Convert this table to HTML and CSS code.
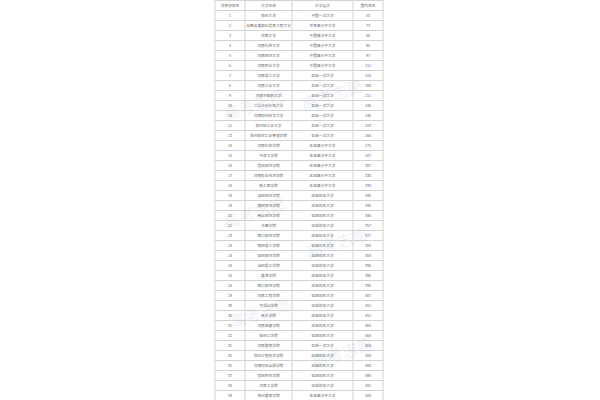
FILE: index.html
```html
<!DOCTYPE html>
<html lang="zh">
<head>
<meta charset="utf-8">
<title>河南省大学排名</title>
<link rel="stylesheet" href="styles.css">
</head>
<body>
<div class="page">
<table class="rank">
<colgroup><col class="c1"><col class="c2"><col class="c3"><col class="c4"></colgroup>
<thead>
<tr><th>河南省排名</th><th>大学名称</th><th>办学层次</th><th>国内排名</th></tr>
</thead>
<tbody>
<tr><td>1</td><td>郑州大学</td><td>中国一流大学</td><td>53</td></tr>
<tr><td>2</td><td>战略支援部队信息工程大学</td><td>世界高水平大学</td><td>73</td></tr>
<tr><td>3</td><td>河南大学</td><td>中国高水平大学</td><td>80</td></tr>
<tr><td>4</td><td>河南科技大学</td><td>中国高水平大学</td><td>94</td></tr>
<tr><td>5</td><td>河南师范大学</td><td>中国高水平大学</td><td>97</td></tr>
<tr><td>6</td><td>河南农业大学</td><td>中国高水平大学</td><td>112</td></tr>
<tr><td>7</td><td>河南理工大学</td><td>区域一流大学</td><td>124</td></tr>
<tr><td>8</td><td>河南工业大学</td><td>区域一流大学</td><td>200</td></tr>
<tr><td>9</td><td>河南中医药大学</td><td>区域一流大学</td><td>211</td></tr>
<tr><td>10</td><td>华北水利水电大学</td><td>区域一流大学</td><td>246</td></tr>
<tr><td>10</td><td>河南财经政法大学</td><td>区域一流大学</td><td>246</td></tr>
<tr><td>12</td><td>郑州轻工业大学</td><td>区域一流大学</td><td>253</td></tr>
<tr><td>13</td><td>郑州航空工业管理学院</td><td>区域一流大学</td><td>268</td></tr>
<tr><td>14</td><td>河南科技学院</td><td>区域高水平大学</td><td>275</td></tr>
<tr><td>15</td><td>中原工学院</td><td>区域高水平大学</td><td>287</td></tr>
<tr><td>16</td><td>信阳师范学院</td><td>区域高水平大学</td><td>307</td></tr>
<tr><td>17</td><td>河南牧业经济学院</td><td>区域高水平大学</td><td>330</td></tr>
<tr><td>18</td><td>新乡医学院</td><td>区域高水平大学</td><td>334</td></tr>
<tr><td>19</td><td>洛阳师范学院</td><td>区域知名大学</td><td>340</td></tr>
<tr><td>19</td><td>南阳师范学院</td><td>区域知名大学</td><td>346</td></tr>
<tr><td>21</td><td>商丘师范学院</td><td>区域知名大学</td><td>346</td></tr>
<tr><td>22</td><td>许昌学院</td><td>区域知名大学</td><td>357</td></tr>
<tr><td>23</td><td>周口师范学院</td><td>区域知名大学</td><td>377</td></tr>
<tr><td>24</td><td>南阳理工学院</td><td>区域知名大学</td><td>384</td></tr>
<tr><td>24</td><td>安阳师范学院</td><td>区域知名大学</td><td>384</td></tr>
<tr><td>26</td><td>洛阳理工学院</td><td>区域知名大学</td><td>398</td></tr>
<tr><td>26</td><td>黄淮学院</td><td>区域知名大学</td><td>398</td></tr>
<tr><td>28</td><td>周口师范学院</td><td>区域知名大学</td><td>398</td></tr>
<tr><td>29</td><td>河南工程学院</td><td>区域知名大学</td><td>407</td></tr>
<tr><td>30</td><td>平顶山学院</td><td>区域知名大学</td><td>452</td></tr>
<tr><td>30</td><td>新乡学院</td><td>区域知名大学</td><td>452</td></tr>
<tr><td>32</td><td>河南城建学院</td><td>区域知名大学</td><td>464</td></tr>
<tr><td>32</td><td>安阳工学院</td><td>区域知名大学</td><td>464</td></tr>
<tr><td>32</td><td>河南警察学院</td><td>区域一流大学</td><td>464</td></tr>
<tr><td>35</td><td>郑州工程技术学院</td><td>区域知名大学</td><td>480</td></tr>
<tr><td>35</td><td>河南财政金融学院</td><td>区域知名大学</td><td>480</td></tr>
<tr><td>37</td><td>信阳农林学院</td><td>区域知名大学</td><td>490</td></tr>
<tr><td>38</td><td>河南工学院</td><td>区域知名大学</td><td>502</td></tr>
<tr><td>39</td><td>郑州警察学院</td><td>区域高水平大学</td><td>508</td></tr>
</tbody>
</table>
<div class="wm wm1">高考志愿</div>
<div class="wm wm2">高考志愿</div>
<div class="wm wm3">高考志愿</div>
<div class="wm wm4">高考志愿</div>
<div class="wm wm5">高考志愿</div>
<div class="wm wm6">高考志愿</div>
</div>
</body>
</html>
```
FILE: styles.css
```css
html, body {
  margin: 0;
  padding: 0;
  background: #ffffff;
}
.page {
  position: relative;
  width: 600px;
  height: 400px;
  overflow: hidden;
  display: flex;
  justify-content: center;
  align-items: flex-start;
}
.rank {
  border-collapse: collapse;
  table-layout: fixed;
  width: 336px;
  margin-left: -2px;
  transform: scale(0.5);
  transform-origin: top center;
  font-family: "Noto Sans CJK SC", "Liberation Sans", sans-serif;
  font-size: 7.4px;
  line-height: 8px;
  color: #6a6a6a;
}
.c1 { width: 60px; }
.c2 { width: 94px; }
.c3 { width: 122px; }
.c4 { width: 60px; }
.rank th, .rank td {
  border: 2px solid #d2d2d2;
  height: 18px;
  padding: 0;
  text-align: center;
  vertical-align: middle;
  font-weight: normal;
  white-space: nowrap;
  overflow: hidden;
}
.wm {
  position: absolute;
  font-family: "Noto Sans CJK SC", sans-serif;
  font-size: 16px;
  font-weight: bold;
  color: rgba(110, 130, 175, 0.10);
  transform: rotate(-18deg);
  white-space: nowrap;
  pointer-events: none;
}
.wm1 { left: 222px; top: 92px; }
.wm2 { left: 300px; top: 82px; }
.wm3 { left: 222px; top: 200px; }
.wm4 { left: 305px; top: 230px; }
.wm5 { left: 228px; top: 300px; }
.wm6 { left: 310px; top: 340px; }
```
